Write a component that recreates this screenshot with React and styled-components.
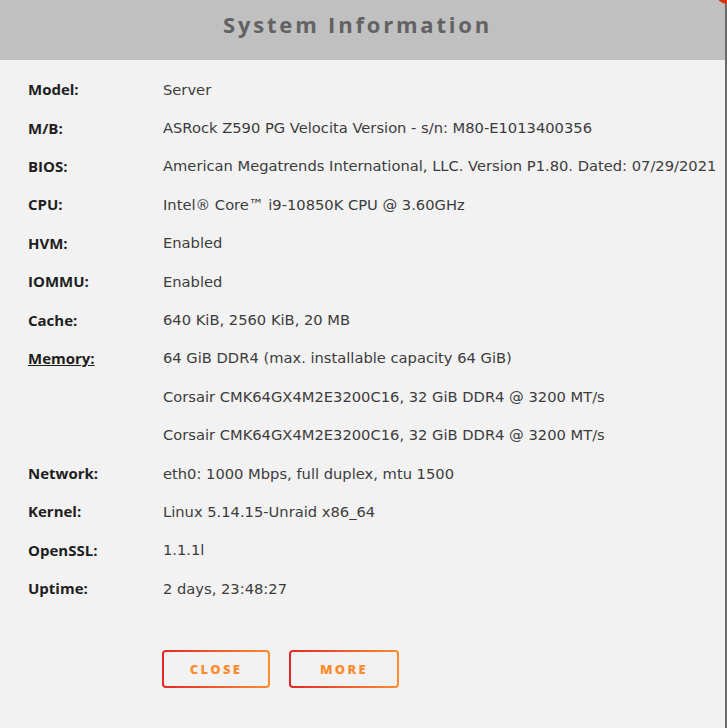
import React from "react";
import styled, { createGlobalStyle } from "styled-components";

const GlobalStyle = createGlobalStyle`
  html, body {
    margin: 0;
    padding: 0;
    background: #f2f2f2;
    overflow: hidden;
  }
  body {
    font-family: "Open Sans", "Noto Sans", sans-serif;
  }
`;

const Dialog = styled.div`
  position: relative;
  width: 727px;
  height: 728px;
  box-sizing: border-box;
  background: #f2f2f2;
  border-right: 2px solid #6b6b6b;
  display: flex;
  flex-direction: column;
`;

const Header = styled.div`
  height: 60px;
  box-sizing: border-box;
  padding: 0 10px 12px 0;
  background: #c0c0c0;
  display: flex;
  align-items: center;
  justify-content: center;
`;

const Title = styled.h2`
  margin: 0;
  font-size: 22px;
  font-weight: 700;
  letter-spacing: 2.8px;
  color: #626262;
`;

const CloseDot = styled.div`
  position: absolute;
  top: -14px;
  right: -12px;
  width: 20px;
  height: 18px;
  border-radius: 50%;
  background: #d4330c;
`;

const Body = styled.div`
  padding: 10px 0 0 28px;
`;

const Row = styled.div`
  display: grid;
  grid-template-columns: 135px 1fr;
  align-items: center;
  height: 38.4px;
`;

const Label = styled.span`
  font-size: 15px;
  font-weight: 700;
  color: #1e1e1e;
  text-decoration: ${(p) => (p.$link ? "underline" : "none")};
`;

const Value = styled.span`
  font-family: "DejaVu Sans", sans-serif;
  font-size: 14.7px;
  color: #3c3c3c;
  white-space: nowrap;
`;

const Buttons = styled.div`
  display: flex;
  gap: 19px;
  padding: 43px 0 0 162px;
`;

const Button = styled.button`
  width: ${(p) => p.$w}px;
  height: 38px;
  box-sizing: border-box;
  border: 2px solid transparent;
  border-radius: 4px;
  background: linear-gradient(#f2f2f2, #f2f2f2) padding-box,
    linear-gradient(90deg, #e22828, #ff8c2f) border-box;
  color: #ff8c2f;
  font-family: inherit;
  font-size: 13px;
  font-weight: 800;
  letter-spacing: 2.3px;
  text-transform: uppercase;
  cursor: pointer;
`;

const rows = [
  ["Model:", "Server"],
  ["M/B:", "ASRock Z590 PG Velocita Version - s/n: M80-E1013400356"],
  ["BIOS:", "American Megatrends International, LLC. Version P1.80. Dated: 07/29/2021"],
  ["CPU:", "Intel® Core™ i9-10850K CPU @ 3.60GHz"],
  ["HVM:", "Enabled"],
  ["IOMMU:", "Enabled"],
  ["Cache:", "640 KiB, 2560 KiB, 20 MB"],
  ["Memory:", "64 GiB DDR4 (max. installable capacity 64 GiB)", true],
  ["", "Corsair CMK64GX4M2E3200C16, 32 GiB DDR4 @ 3200 MT/s"],
  ["", "Corsair CMK64GX4M2E3200C16, 32 GiB DDR4 @ 3200 MT/s"],
  ["Network:", "eth0: 1000 Mbps, full duplex, mtu 1500"],
  ["Kernel:", "Linux 5.14.15-Unraid x86_64"],
  ["OpenSSL:", "1.1.1l"],
  ["Uptime:", "2 days, 23:48:27"],
];

export default function App() {
  return (
    <>
      <GlobalStyle />
      <Dialog>
        <CloseDot />
        <Header>
          <Title>System Information</Title>
        </Header>
        <Body>
          {rows.map(([label, value, link], i) => (
            <Row key={i}>
              <Label $link={link}>{label}</Label>
              <Value>{value}</Value>
            </Row>
          ))}
        </Body>
        <Buttons>
          <Button $w={108}>Close</Button>
          <Button $w={110}>More</Button>
        </Buttons>
      </Dialog>
    </>
  );
}
